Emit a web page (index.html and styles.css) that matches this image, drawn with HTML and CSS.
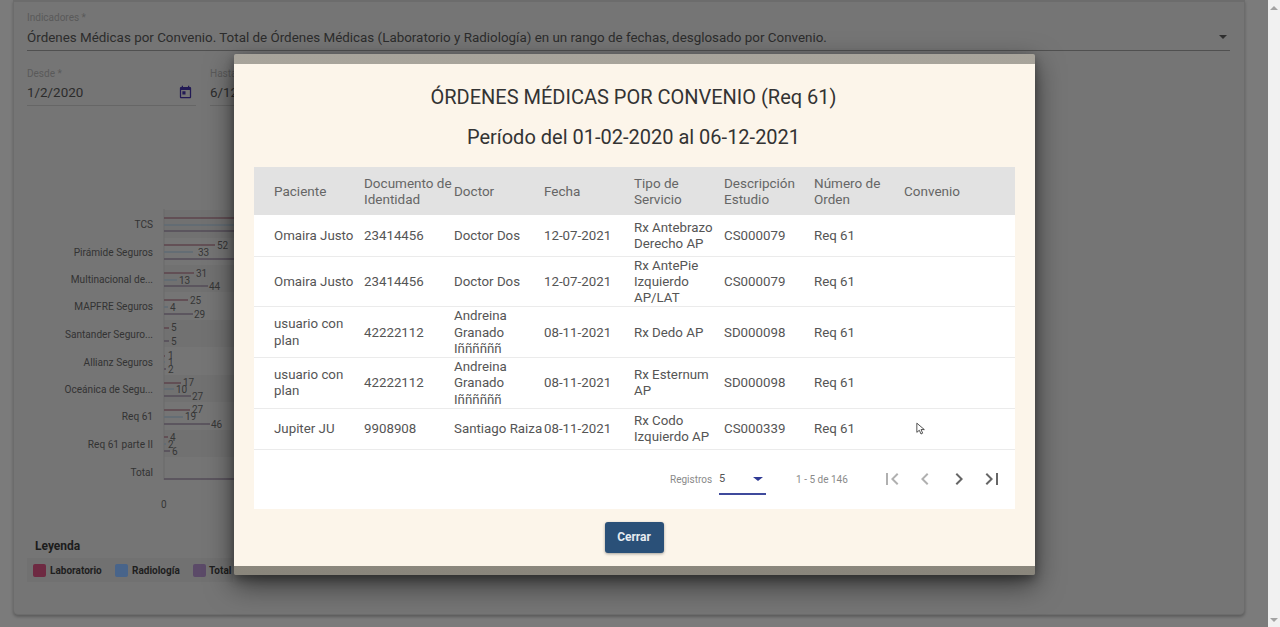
FILE: index.html
```html
<!doctype html>
<html lang="es">
  <head>
    <meta charset="UTF-8" />
    <meta name="viewport" content="width=device-width, initial-scale=1" />
    <title>Indicadores</title>
    <link rel="stylesheet" href="styles.css">
  </head>
  <body>
    <div class="page">
      <main class="card">
        <div class="field field-full">
          <label>Indicadores *</label>
          <div class="field-value">
            <span>Órdenes Médicas por Convenio. Total de Órdenes Médicas (Laboratorio y Radiología) en un rango de fechas, desglosado por Convenio.</span>
            <i class="select-arrow"></i>
          </div>
        </div>

        <div class="dates">
          <div class="field field-date">
            <label>Desde *</label>
            <div class="field-value">
              <span>1/2/2020</span>
              <svg class="calendar" viewBox="0 0 24 24" width="15" height="15">
                <path d="M19 3h-1V1h-2v2H8V1H6v2H5c-1.1 0-2 .9-2 2v14c0 1.1.9 2 2 2h14c1.1 0 2-.9 2-2V5c0-1.100-.9-2-2-2zm0 16H5V8h14v11zM7 10h5v5H7z"/>
              </svg>
            </div>
          </div>
          <div class="field field-date">
            <label>Hasta *</label>
            <div class="field-value"><span>6/12/2021</span></div>
          </div>
        </div>

        <svg class="chart" width="234" height="300" viewBox="0 0 234 300">
          <rect class="band" x="164" y="10" width="70" height="28"/>
          <rect class="band" x="164" y="65" width="70" height="27"/>
          <rect class="band" x="164" y="120" width="70" height="27"/>
          <rect class="band" x="164" y="175" width="70" height="27"/>
          <rect class="band" x="164" y="230" width="70" height="27"/>
          <line class="axis" x1="164" y1="9" x2="164" y2="280"/>

          <g class="labels">
            <text x="153" y="28">TCS</text>
            <text x="153" y="56">Pirámide Seguros</text>
            <text x="153" y="83">Multinacional de...</text>
            <text x="153" y="110">MAPFRE Seguros</text>
            <text x="153" y="138">Santander Seguro...</text>
            <text x="153" y="166">Allianz Seguros</text>
            <text x="153" y="193">Oceánica de Segu...</text>
            <text x="153" y="220">Req 61</text>
            <text x="153" y="248">Req 61 parte II</text>
            <text x="153" y="276">Total</text>
          </g>

          <g class="bars-lab">
            <line x1="164" x2="234" y1="18" y2="18"/>
            <line x1="164" x2="215" y1="45" y2="45"/>
            <line x1="164" x2="194" y1="73" y2="73"/>
            <line x1="164" x2="188" y1="100" y2="100"/>
            <line x1="164" x2="169" y1="128" y2="128"/>
            <line x1="164" x2="165" y1="156" y2="156"/>
            <line x1="164" x2="181" y1="183" y2="183"/>
            <line x1="164" x2="190" y1="210" y2="210"/>
            <line x1="164" x2="168" y1="237" y2="237"/>
          </g>
          <g class="bars-rad">
            <line x1="164" x2="234" y1="25" y2="25"/>
            <line x1="164" x2="193" y1="52" y2="52"/>
            <line x1="164" x2="177" y1="80" y2="80"/>
            <line x1="164" x2="168" y1="107" y2="107"/>
            <line x1="164" x2="165" y1="162" y2="162"/>
            <line x1="164" x2="174" y1="189" y2="189"/>
            <line x1="164" x2="183" y1="217" y2="217"/>
            <line x1="164" x2="166" y1="244" y2="244"/>
          </g>
          <g class="bars-total">
            <line x1="164" x2="234" y1="31" y2="31"/>
            <line x1="164" x2="234" y1="59" y2="59"/>
            <line x1="164" x2="208" y1="86" y2="86"/>
            <line x1="164" x2="193" y1="114" y2="114"/>
            <line x1="164" x2="169" y1="141" y2="141"/>
            <line x1="164" x2="166" y1="169" y2="169"/>
            <line x1="164" x2="191" y1="196" y2="196"/>
            <line x1="164" x2="210" y1="224" y2="224"/>
            <line x1="164" x2="170" y1="251" y2="251"/>
            <line x1="164" x2="234" y1="279" y2="279"/>
          </g>

          <g class="values">
            <text x="217" y="49">52</text>
            <text x="198" y="56">33</text>
            <text x="196" y="77">31</text>
            <text x="179" y="84">13</text>
            <text x="209" y="90">44</text>
            <text x="190" y="104">25</text>
            <text x="170" y="111">4</text>
            <text x="194" y="118">29</text>
            <text x="171" y="131">5</text>
            <text x="171" y="145">5</text>
            <text x="168" y="159">1</text>
            <text x="168" y="166">1</text>
            <text x="168" y="173">2</text>
            <text x="183" y="186">17</text>
            <text x="176" y="193">10</text>
            <text x="192" y="200">27</text>
            <text x="192" y="213">27</text>
            <text x="185" y="220">19</text>
            <text x="211" y="228">46</text>
            <text x="170" y="241">4</text>
            <text x="168" y="248">2</text>
            <text x="172" y="255">6</text>
            <text x="161" y="308">0</text>
          </g>
        </svg>

        <section class="legend">
          <h4>Leyenda</h4>
          <ul class="legend-items">
            <li><i class="swatch swatch-lab"></i>Laboratorio</li>
            <li><i class="swatch swatch-rad"></i>Radiología</li>
            <li><i class="swatch swatch-total"></i>Total</li>
          </ul>
        </section>
      </main>
      <div class="scrollbar"><i class="scroll-up"></i><i class="scroll-down"></i></div>
    </div>

    <div class="modal">
      <div class="modal-body">
        <h2>ÓRDENES MÉDICAS POR CONVENIO (Req 61)</h2>
        <h3>Período del 01-02-2020 al 06-12-2021</h3>

        <div class="table-wrap">
          <table>
            <thead>
              <tr>
                <th>Paciente</th>
                <th>Documento de Identidad</th>
                <th>Doctor</th>
                <th>Fecha</th>
                <th>Tipo de Servicio</th>
                <th>Descripción Estudio</th>
                <th>Número de Orden</th>
                <th>Convenio</th>
              </tr>
            </thead>
            <tbody>
              <tr>
                <td>Omaira Justo</td>
                <td>23414456</td>
                <td>Doctor Dos</td>
                <td>12-07-2021</td>
                <td>Rx Antebrazo Derecho AP</td>
                <td>CS000079</td>
                <td>Req 61</td>
                <td></td>
              </tr>
              <tr>
                <td>Omaira Justo</td>
                <td>23414456</td>
                <td>Doctor Dos</td>
                <td>12-07-2021</td>
                <td>Rx AntePie Izquierdo AP/LAT</td>
                <td>CS000079</td>
                <td>Req 61</td>
                <td></td>
              </tr>
              <tr>
                <td>usuario con plan</td>
                <td>42222112</td>
                <td>Andreina Granado Iññññññ</td>
                <td>08-11-2021</td>
                <td>Rx Dedo AP</td>
                <td>SD000098</td>
                <td>Req 61</td>
                <td></td>
              </tr>
              <tr>
                <td>usuario con plan</td>
                <td>42222112</td>
                <td>Andreina Granado Iññññññ</td>
                <td>08-11-2021</td>
                <td>Rx Esternum AP</td>
                <td>SD000098</td>
                <td>Req 61</td>
                <td></td>
              </tr>
              <tr>
                <td>Jupiter JU</td>
                <td>9908908</td>
                <td class="nowrap">Santiago Raiza</td>
                <td>08-11-2021</td>
                <td>Rx Codo Izquierdo AP</td>
                <td>CS000339</td>
                <td>Req 61</td>
                <td></td>
              </tr>
            </tbody>
          </table>

          <div class="paginator">
            <span class="page-label">Registros</span>
            <div class="page-size"><span>5</span><i class="size-arrow"></i></div>
            <span class="page-range">1 - 5 de 146</span>
            <div class="page-buttons">
              <svg class="off" viewBox="0 0 24 24" width="24" height="24"><path d="M18.410 16.590 13.820 12l4.590-4.590L17 6l-6 6 6 6zM6 6h2v12H6z"/></svg>
              <svg class="off" viewBox="0 0 24 24" width="24" height="24"><path d="M15.410 7.410 14 6l-6 6 6 6 1.410-1.410L10.830 12z"/></svg>
              <svg viewBox="0 0 24 24" width="24" height="24"><path d="M10 6 8.590 7.410 13.170 12l-4.580 4.590L10 18l6-6z"/></svg>
              <svg viewBox="0 0 24 24" width="24" height="24"><path d="M5.590 7.410 10.180 12l-4.590 4.590L7 18l6-6-6-6zM16 6h2v12h-2z"/></svg>
            </div>
          </div>
        </div>

        <div class="modal-actions">
          <button type="button">Cerrar</button>
        </div>
      </div>
    </div>

    <svg class="cursor" viewBox="0 0 12 16" width="10" height="14">
      <path d="M1 1v11l3-2.500 2 4.500 2-1-2-4.300h4z"/>
    </svg>
  </body>
</html>
```
FILE: styles.css
```css
* {
  box-sizing: border-box;
}
html,
body {
  height: 100%;
}
body {
  margin: 0;
  overflow: hidden;
  background: #7b7b7b;
  font-family: Roboto, Arial, sans-serif;
}
.page {
  display: flex;
  height: 627px;
}
.card {
  width: 1232px;
  height: 615px;
  margin-left: 13px;
  padding: 10px 14px 0 13px;
  background: #757575;
  border-radius: 0 0 5px 5px;
  border: 1px solid #6c6c6c;
  border-top: 2px solid #6c6c6c;
  box-shadow: 0 2px 3px rgba(0, 0, 0, 0.25);
}
.scrollbar {
  width: 12px;
  margin-left: 23px;
  background: #f1f1f1;
  display: flex;
  flex-direction: column;
  align-items: center;
  justify-content: space-between;
  padding: 6px 0 5px;
}
.scroll-up {
  width: 0;
  height: 0;
  border-left: 4px solid transparent;
  border-right: 4px solid transparent;
  border-bottom: 4px solid #a3a3a3;
}
.scroll-down {
  width: 0;
  height: 0;
  border-left: 4px solid transparent;
  border-right: 4px solid transparent;
  border-top: 4px solid #a3a3a3;
}

.field label {
  display: block;
  font-size: 10px;
  line-height: 12px;
  color: #5a5a5a;
}
.field-value {
  display: flex;
  align-items: center;
  justify-content: space-between;
  font-size: 13.400px;
  color: #2c2c2c;
  border-bottom: 1px solid #505050;
}
.field-full .field-value {
  height: 27px;
  padding-right: 2px;
}
.select-arrow {
  width: 0;
  height: 0;
  margin-right: 1px;
  border-left: 4.500px solid transparent;
  border-right: 4.500px solid transparent;
  border-top: 4.500px solid #2e2e2e;
}
.dates {
  display: flex;
  gap: 14px;
  margin-top: 17px;
}
.field-date {
  width: 169px;
}
.field-date .field-value {
  height: 26px;
  padding-right: 3px;
  border-bottom: 1px solid #666;
}
.calendar {
  fill: #221a55;
}
.chart {
  display: block;
  margin: 94px 0 0 -27px;
  overflow: visible;
}
.band {
  fill: #717171;
}
.axis {
  stroke: #6a6a6a;
  stroke-width: 1;
}
.labels text {
  text-anchor: end;
  font-size: 10.100px;
  fill: #333;
}
.values text {
  font-size: 10px;
  fill: #363636;
}
.bars-lab line {
  stroke: #5e444c;
  stroke-width: 1.500;
}
.bars-rad line {
  stroke: #5f6b74;
  stroke-width: 1.500;
}
.bars-total line {
  stroke: #544d59;
  stroke-width: 1.500;
}
.legend {
  margin-top: 39px;
}
.legend h4 {
  margin: 0 0 0 8px;
  font-size: 12px;
  line-height: 14px;
  font-weight: 700;
  color: #1c1c1c;
}
.legend-items {
  display: flex;
  align-items: center;
  width: 206px;
  height: 24px;
  margin: 5px 0 0;
  padding: 0 0 0 6px;
  background: #717171;
  list-style: none;
}
.legend-items li {
  display: flex;
  align-items: center;
  gap: 4px;
  font-size: 10px;
  font-weight: 700;
  color: #1e1e1e;
}
.legend-items li:nth-child(1) {
  width: 82px;
}
.legend-items li:nth-child(2) {
  width: 78px;
}
.legend-items li:nth-child(3) {
  gap: 3px;
}
.swatch {
  width: 13px;
  height: 13px;
  border-radius: 2px;
}
.swatch-lab {
  background: #6e2a42;
}
.swatch-rad {
  background: #48648a;
}
.swatch-total {
  background: #5b4a68;
}

.modal {
  position: absolute;
  left: 234px;
  top: 54px;
  width: 801px;
  height: 521px;
  padding-top: 10px;
  background: linear-gradient(#a8a49b, #8a867c);
  border-radius: 2px;
  box-shadow: 0 10px 28px rgba(0, 0, 0, 0.55), 0 4px 10px rgba(0, 0, 0, 0.3);
}
.modal-body {
  height: 502px;
  padding: 0 20px;
  background: #fcf5ea;
}
.modal-body h2,
.modal-body h3 {
  margin: 0;
  padding-right: 2px;
  font-size: 20px;
  font-weight: 400;
  text-align: center;
  color: #333;
}
.modal-body h2 {
  padding-top: 21px;
  line-height: 24px;
}
.modal-body h3 {
  margin-top: 16px;
  line-height: 24px;
}
.table-wrap {
  margin-top: 18px;
  background: #fff;
}
table {
  width: 100%;
  border-collapse: collapse;
  table-layout: fixed;
  font-size: 13.300px;
  line-height: 16.200px;
  color: #555;
}
th {
  height: 48px;
  padding: 0;
  text-align: left;
  font-size: 13.500px;
  font-weight: 400;
  color: #666;
  background: #e2e2e2;
}
td {
  height: 41px;
  padding: 1px 0 0;
  border-bottom: 1px solid #ebebeb;
}
tbody tr:nth-child(2) td,
tbody tr:nth-child(4) td {
  height: 50px;
}
tbody tr:nth-child(3) td {
  height: 51px;
}
th:first-child,
td:first-child {
  width: 110px;
  padding-left: 20px;
}
th:nth-child(n + 2):nth-child(-n + 7),
td:nth-child(n + 2):nth-child(-n + 7) {
  width: 90px;
}
.nowrap {
  white-space: nowrap;
}
.paginator {
  display: flex;
  align-items: center;
  height: 59px;
  padding-left: 416px;
  font-size: 10px;
  color: #8a8a8a;
}
.page-size {
  display: flex;
  align-items: center;
  justify-content: space-between;
  width: 47px;
  height: 28px;
  margin: 3px 0 0 7px;
  padding: 0 3px 2px 0;
  font-size: 11px;
  color: #555;
  border-bottom: 2px solid #3f4a9c;
}
.size-arrow {
  width: 0;
  height: 0;
  border-left: 5px solid transparent;
  border-right: 5px solid transparent;
  border-top: 4px solid #2f3a94;
}
.page-range {
  margin-left: 30px;
}
.page-buttons {
  display: flex;
  gap: 9.500px;
  margin-left: 32px;
}
.page-buttons svg {
  fill: #666;
}
.page-buttons svg.off {
  fill: #b0b0b0;
}
.modal-actions {
  display: flex;
  justify-content: center;
  margin-top: 13px;
  padding-right: 1px;
}
.modal-actions button {
  width: 59px;
  height: 31px;
  padding: 0;
  border: none;
  border-radius: 3px;
  font-family: inherit;
  font-size: 12px;
  font-weight: 700;
  color: #e6ebf0;
  background: #2a5078;
  box-shadow: 0 1px 3px rgba(0, 0, 0, 0.35);
}
.cursor {
  position: absolute;
  left: 916px;
  top: 422px;
  fill: #fff;
  stroke: #333;
  stroke-width: 1;
}
```
